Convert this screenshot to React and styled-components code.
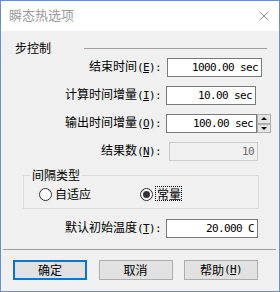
import React from 'react';
import styled, { createGlobalStyle } from 'styled-components';

const Global = createGlobalStyle`
  html, body { margin: 0; padding: 0; background: #fff; }
  body { font-family: "Noto Sans CJK SC", "Noto Sans", sans-serif; font-size: 12px; color: #000; }
  * { box-sizing: border-box; }
`;

const Window = styled.div`
  width: 280px;
  height: 292px;
  border: 1px solid #6d8fbb;
  display: flex;
  flex-direction: column;
  background: #f0f0f0;
`;

const TitleBar = styled.div`
  height: 30px;
  flex: none;
  background: #fff;
  display: flex;
  align-items: center;
  justify-content: space-between;
  padding: 0 10px 1px 8px;
`;

const Title = styled.span`
  font-size: 13px;
  line-height: 16px;
  color: #9a9a9a;
  margin-bottom: 2px;
`;

const CloseIcon = () => (
  <svg width="10" height="10" viewBox="0 0 10 10">
    <path d="M0.5 0.5 L9.5 9.5 M9.5 0.5 L0.5 9.5" stroke="#8a8a8a" strokeWidth="1" fill="none" />
  </svg>
);

const Body = styled.div`
  flex: 1;
  display: flex;
  flex-direction: column;
  padding-top: 9px;
`;

const SectionHeader = styled.div`
  display: flex;
  align-items: center;
  height: 16px;
  line-height: 16px;
  padding: 0 12px 0 14px;
`;

const HeaderLine = styled.div`
  flex: 1;
  height: 1px;
  background: #a0a0a0;
  margin-left: 33px;
`;

const FieldRow = styled.div`
  display: flex;
  align-items: center;
  height: 19px;
  margin-top: ${p => p.$mt}px;
`;

const Label = styled.div`
  width: 160px;
  flex: none;
  text-align: right;
  white-space: nowrap;
  line-height: 16px;
  margin-bottom: 2px;
`;

const Mn = styled.span`
  font-family: "DejaVu Sans Mono", "Liberation Mono", monospace;
  font-size: 11px;
  letter-spacing: -0.62px;
`;

const U = styled.span`
  text-decoration: underline;
`;

const Edit = styled.div`
  flex: none;
  width: ${p => p.$w}px;
  height: 19px;
  margin-left: ${p => p.$ml}px;
  border: 1px solid ${p => (p.$disabled ? '#cccccc' : '#7a7a7a')};
  background: ${p => (p.$disabled ? '#f0f0f0' : '#fff')};
  color: ${p => (p.$disabled ? '#6d6d6d' : '#000')};
  display: flex;
  align-items: center;
  justify-content: flex-end;
  padding-right: 3px;
  font-family: "DejaVu Sans Mono", "Liberation Mono", monospace;
  font-size: 11px;
  letter-spacing: -0.62px;
  white-space: pre;
`;

const Spin = styled.div`
  flex: none;
  width: 14px;
  height: 19px;
  display: flex;
  flex-direction: column;
`;

const SpinBtn = styled.div`
  flex: 1;
  border: 1px solid #adadad;
  background: #e5e5e5;
  display: flex;
  align-items: center;
  justify-content: center;
  &::after {
    content: '';
    width: 0;
    height: 0;
    border-left: 3px solid transparent;
    border-right: 3px solid transparent;
    ${p => (p.$down ? 'border-top: 3px solid #000;' : 'border-bottom: 3px solid #000;')}
  }
`;

const Group = styled.fieldset`
  margin: 6px 0 0 22px;
  width: 236px;
  padding: 3px 0 6px 0;
  border: 1px solid #dcdcdc;
  min-width: 0;
`;

const Legend = styled.legend`
  padding: 0 2px;
  margin-left: 6px;
  line-height: 16px;
`;

const RadioRow = styled.div`
  display: grid;
  grid-template-columns: 101px auto;
  align-items: center;
  height: 16px;
  padding-left: 15px;
`;

const RadioOption = styled.div`
  display: flex;
  align-items: center;
`;

const RadioCircle = styled.span`
  width: 13px;
  height: 13px;
  flex: none;
  border-radius: 50%;
  border: 1px solid #333;
  background: #fff;
  display: flex;
  align-items: center;
  justify-content: center;
  &::after {
    content: '';
    width: 7px;
    height: 7px;
    border-radius: 50%;
    background: #333;
    display: ${p => (p.$checked ? 'block' : 'none')};
  }
`;

const RadioText = styled.span`
  line-height: 13px;
  margin-left: ${p => (p.$focus ? 2 : 3)}px;
  border: ${p => (p.$focus ? '1px dotted #000' : 'none')};
  padding: ${p => (p.$focus ? '0 0 0 1px' : '0')};
  margin-bottom: 1px;
`;

const Separator = styled.div`
  height: 1px;
  background: #a0a0a0;
  margin: 11px 3px 0 2px;
`;

const ButtonRow = styled.div`
  display: flex;
  gap: 11.5px;
  padding-left: 12px;
  margin-top: 10px;
`;

const Button = styled.div`
  width: 74px;
  height: 20px;
  display: flex;
  align-items: center;
  justify-content: center;
  background: #e1e1e1;
  border: ${p => (p.$default ? '2px solid #0078d7' : '1px solid #adadad')};
  line-height: 16px;
`;

export default function App() {
  return (
    <>
      <Global />
      <Window>
        <TitleBar>
          <Title>瞬态热选项</Title>
          <CloseIcon />
        </TitleBar>
        <Body>
          <SectionHeader>
            <span>步控制</span>
            <HeaderLine />
          </SectionHeader>

          <FieldRow $mt={2}>
            <Label>结束时间<Mn>(<U>E</U>):</Mn></Label>
            <Edit $w={95} $ml={6}>1000.00 sec</Edit>
          </FieldRow>
          <FieldRow $mt={9}>
            <Label>计算时间增量<Mn>(<U>I</U>):</Mn></Label>
            <Edit $w={90} $ml={5}>10.00 sec</Edit>
          </FieldRow>
          <FieldRow $mt={9}>
            <Label>输出时间增量<Mn>(<U>O</U>):</Mn></Label>
            <Edit $w={91} $ml={5}>100.00 sec</Edit>
            <Spin>
              <SpinBtn />
              <SpinBtn $down />
            </Spin>
          </FieldRow>
          <FieldRow $mt={9}>
            <Label>结果数<Mn>(<U>N</U>):</Mn></Label>
            <Edit $w={89} $ml={8} $disabled>10</Edit>
          </FieldRow>

          <Group>
            <Legend>间隔类型</Legend>
            <RadioRow>
              <RadioOption>
                <RadioCircle />
                <RadioText>自适应</RadioText>
              </RadioOption>
              <RadioOption>
                <RadioCircle $checked />
                <RadioText $focus>常量</RadioText>
              </RadioOption>
            </RadioRow>
          </Group>

          <FieldRow $mt={10}>
            <Label>默认初始温度<Mn>(<U>T</U>):</Mn></Label>
            <Edit $w={92} $ml={5}>20.000 C</Edit>
          </FieldRow>

          <Separator />

          <ButtonRow>
            <Button $default>确定</Button>
            <Button>取消</Button>
            <Button>帮助<Mn>(<U>H</U>)</Mn></Button>
          </ButtonRow>
        </Body>
      </Window>
    </>
  );
}
